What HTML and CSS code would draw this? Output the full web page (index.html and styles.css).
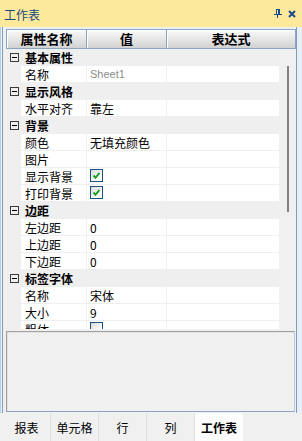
FILE: index.html
```html
<!DOCTYPE html>
<html lang="zh">
<head>
<meta charset="utf-8">
<link rel="stylesheet" href="styles.css">
</head>
<body>
<div class="panel">
  <div class="titlebar">
    <span class="title">工作表</span>
    <svg class="pin" width="8" height="9" viewBox="0 0 8 9" fill="#1e4a8c">
      <rect x="2" y="0" width="4" height="1"/>
      <rect x="2" y="0" width="1" height="5"/>
      <rect x="4" y="0" width="2" height="5"/>
      <rect x="0" y="5" width="8" height="1"/>
      <rect x="3" y="6" width="1" height="3"/>
    </svg>
    <svg class="close" width="8" height="8" viewBox="0 0 8 8">
      <path d="M1 1L7 7M7 1L1 7" stroke="#1e4a8c" stroke-width="2"/>
    </svg>
  </div>
  <div class="body">
    <div class="grid">
      <div class="ghead">
        <div class="hc c1">属性名称</div>
        <div class="hc c2">值</div>
        <div class="hc c3">表达式</div>
      </div>
      <div class="gbody">
        <div class="rows">
          <div class="grp"><span class="exp"></span>基本属性</div>
          <div class="item"><span class="gut"></span><span class="n">名称</span><span class="v muted">Sheet1</span><span class="e"></span></div>
          <div class="grp"><span class="exp"></span>显示风格</div>
          <div class="item"><span class="gut"></span><span class="n">水平对齐</span><span class="v">靠左</span><span class="e"></span></div>
          <div class="grp"><span class="exp"></span>背景</div>
          <div class="item"><span class="gut"></span><span class="n">颜色</span><span class="v">无填充颜色</span><span class="e"></span></div>
          <div class="item"><span class="gut"></span><span class="n">图片</span><span class="v"></span><span class="e"></span></div>
          <div class="item"><span class="gut"></span><span class="n">显示背景</span><span class="v"><span class="cb"><svg width="11" height="11" viewBox="0 0 11 11"><path d="M2.5 5.5L4.5 7.8L8.5 2.8" fill="none" stroke="#1f9f2a" stroke-width="2"/></svg></span></span><span class="e"></span></div>
          <div class="item"><span class="gut"></span><span class="n">打印背景</span><span class="v"><span class="cb"><svg width="11" height="11" viewBox="0 0 11 11"><path d="M2.5 5.5L4.5 7.8L8.5 2.8" fill="none" stroke="#1f9f2a" stroke-width="2"/></svg></span></span><span class="e"></span></div>
          <div class="grp"><span class="exp"></span>边距</div>
          <div class="item"><span class="gut"></span><span class="n">左边距</span><span class="v">0</span><span class="e"></span></div>
          <div class="item"><span class="gut"></span><span class="n">上边距</span><span class="v">0</span><span class="e"></span></div>
          <div class="item"><span class="gut"></span><span class="n">下边距</span><span class="v">0</span><span class="e"></span></div>
          <div class="grp"><span class="exp"></span>标签字体</div>
          <div class="item"><span class="gut"></span><span class="n">名称</span><span class="v">宋体</span><span class="e"></span></div>
          <div class="item"><span class="gut"></span><span class="n">大小</span><span class="v">9</span><span class="e"></span></div>
          <div class="item"><span class="gut"></span><span class="n">粗体</span><span class="v"><span class="cb"></span></span><span class="e"></span></div>
        </div>
        <div class="vscroll"><div class="thumb"></div></div>
      </div>
    </div>
    <div class="desc"></div>
  </div>
  <div class="tabs">
    <div class="tab">报表</div>
    <div class="tab">单元格</div>
    <div class="tab">行</div>
    <div class="tab">列</div>
    <div class="tab on">工作表</div>
  </div>
</div>
</body>
</html>
```

FILE: styles.css
```css
* { box-sizing: border-box; margin: 0; padding: 0; }
html, body { width: 302px; height: 441px; overflow: hidden; }
body {
  background: #f0f0f0;
  font-family: "Noto Sans CJK SC", sans-serif;
  font-size: 12px;
  color: #000;
}
.panel { width: 302px; height: 441px; display: flex; flex-direction: column; }

.titlebar {
  height: 27px;
  background: #fde99c;
  display: flex;
  align-items: flex-start;
  padding-left: 4px;
}
.title { flex: 1; margin-top: 7px; line-height: 16px; color: #21477a; font-size: 12px; }
.pin { margin-top: 9px; margin-right: 6px; }
.close { margin-top: 10px; margin-right: 6px; }

.body {
  height: 386px;
  padding: 2px 6px 1px 6px;
  display: flex;
  flex-direction: column;
  box-shadow: inset 1px 0 #b8cde6, inset 2px 0 #eef3f9, inset 3px 0 #7f9db9,
              inset -5px 0 #e6eef7, inset -6px 0 #7f9db9;
}

.grid { height: 300px; display: flex; flex-direction: column; }
.ghead {
  height: 20px;
  display: flex;
  border: 1px solid #8ca5c2;
  background: linear-gradient(#fafafa, #d2d2d2);
}
.hc {
  font-weight: bold;
  font-size: 13px;
  line-height: 18px;
  text-align: center;
  border-right: 1px solid #8ca5c2;
  box-shadow: inset 1px 1px #ffffff;
}
.c1 { width: 80px; }
.c2 { width: 80px; }
.c3 { flex: 1; border-right: none; }

.gbody { height: 280px; display: flex; padding-left: 1px; }
.rows { width: 272px; overflow: hidden; }
.grp {
  height: 17px;
  background: #efefef;
  display: flex;
  align-items: center;
  font-weight: bold;
  font-size: 12px;
  line-height: 17px;
}
.exp {
  width: 9px;
  height: 9px;
  border: 1px solid #3a3a3a;
  margin: 0 6px 0 3px;
  display: flex;
  align-items: center;
  justify-content: center;
}
.exp::after { content: ""; width: 5px; height: 1px; background: #000; }

.item { height: 17px; display: flex; background: #efefef; }
.gut { width: 14px; }
.n, .v, .e {
  background: #fff;
  border-right: 1px solid #efefef;
  box-shadow: inset 0 -1px #efefef;
  line-height: 17px;
  white-space: nowrap;
  overflow: hidden;
}
.n { width: 66px; padding-left: 4px; }
.v { width: 80px; padding-left: 3px; }
.e { flex: 1; border-right: none; }
.muted { color: #8c8c8c; font-family: "Liberation Sans", sans-serif; font-size: 11px; }

.cb {
  display: block;
  width: 13px;
  height: 13px;
  margin-top: 1px;
  border: 1px solid #1c5180;
  background: linear-gradient(135deg, #d8d8d8, #ffffff 70%);
}
.cb svg { display: block; }

.vscroll { width: 17px; background: #f0f0f0; }
.thumb { width: 2px; height: 146px; margin: 17px 0 0 8px; background: #808080; }

.desc {
  height: 81px;
  margin-top: 2px;
  margin-right: 1px;
  border-top: 1px solid #a0a0a0;
  border-left: 1px solid #a0a0a0;
  border-right: 1px solid #b9c9dd;
  border-bottom: 1px solid #8ca5c2;
  box-shadow: inset 1px 1px #e3e3e3;
  background: #f0f0f0;
}

.tabs { height: 28px; display: flex; padding-left: 3px; background: #f0f0f0; }
.tab {
  width: 48px;
  display: flex;
  align-items: center;
  justify-content: center;
  border-right: 1px solid #dedede;
  font-size: 12px;
  color: #000;
}
.tab.on { background: #fcfcfc; font-weight: bold; border-right: none; }
```
